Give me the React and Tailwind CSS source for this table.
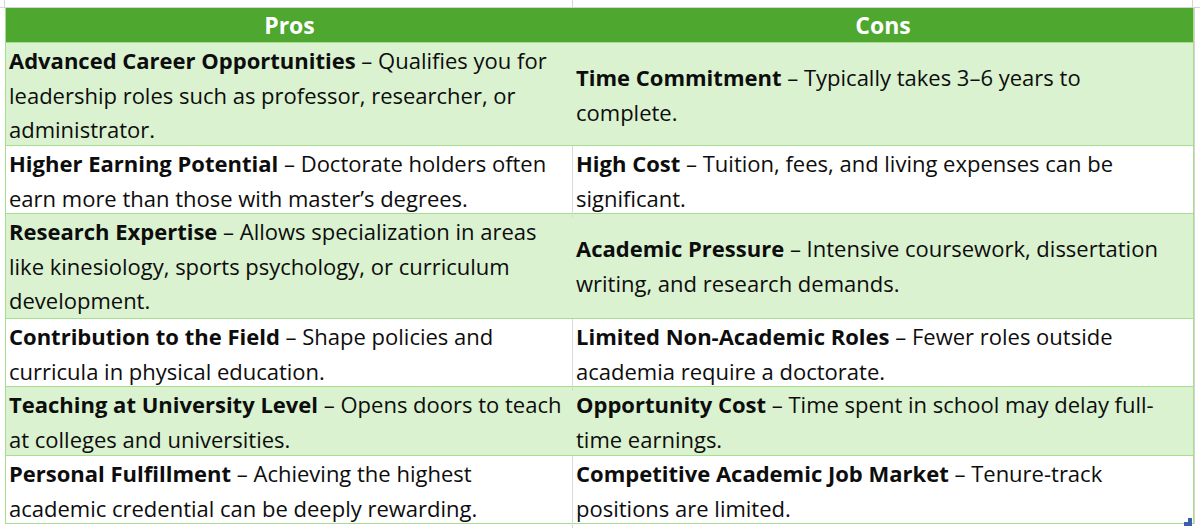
import React from 'react';

const rows = [
  {
    h: 'h-[103px]',
    band: true,
    pros: { b: 'Advanced Career Opportunities', lines: ['Qualifies you for', 'leadership roles such as professor, researcher, or', 'administrator.'] },
    cons: { b: 'Time Commitment', lines: ['Typically takes 3–6 years to', 'complete.'] },
  },
  {
    h: 'h-[68px]',
    band: false,
    pros: { b: 'Higher Earning Potential', lines: ['Doctorate holders often', 'earn more than those with master’s degrees.'] },
    cons: { b: 'High Cost', lines: ['Tuition, fees, and living expenses can be', 'significant.'] },
  },
  {
    h: 'h-[105px]',
    band: true,
    pros: { b: 'Research Expertise', lines: ['Allows specialization in areas', 'like kinesiology, sports psychology, or curriculum', 'development.'] },
    cons: { b: 'Academic Pressure', lines: ['Intensive coursework, dissertation', 'writing, and research demands.'] },
  },
  {
    h: 'h-[68px]',
    band: false,
    pros: { b: 'Contribution to the Field', lines: ['Shape policies and', 'curricula in physical education.'] },
    cons: { b: 'Limited Non-Academic Roles', lines: ['Fewer roles outside', 'academia require a doctorate.'] },
  },
  {
    h: 'h-[69px]',
    band: true,
    pros: { b: 'Teaching at University Level', lines: ['Opens doors to teach', 'at colleges and universities.'] },
    cons: { b: 'Opportunity Cost', lines: ['Time spent in school may delay full-', 'time earnings.'] },
  },
  {
    h: 'h-[68px]',
    band: false,
    pros: { b: 'Personal Fulfillment', lines: ['Achieving the highest', 'academic credential can be deeply rewarding.'] },
    cons: { b: 'Competitive Academic Job Market', lines: ['Tenure-track', 'positions are limited.'] },
  },
];

const Cell = ({ item, className }) => (
  <div className={`flex items-center px-[3px] pb-[3px] ${className}`}>
    <div className="leading-[34.5px] whitespace-nowrap">
      <div>
        <span className="font-bold">{item.b}</span> – {item.lines[0]}
      </div>
      {item.lines.slice(1).map((l, i) => (
        <div key={i}>{l}</div>
      ))}
    </div>
  </div>
);

export default function App() {
  return (
    <div
      className="w-[1200px] h-[528px] bg-white overflow-hidden text-[22px] text-[#0d0d0d] relative"
      style={{ fontFamily: '"Open Sans", "Noto Sans", sans-serif' }}
    >
      {/* sheet row above the table */}
      <div className="h-[8px] border-b border-[#d4d4d4] flex">
        <div className="w-[5px] border-r border-[#d4d4d4]" />
        <div className="w-[568px] border-r border-[#d4d4d4]" />
        <div className="w-[620px] border-r border-[#d4d4d4]" />
      </div>

      <div className="flex">
        <div className="w-[5px] shrink-0" />
        <div className="w-[1189px] shrink-0 border-l border-r border-b border-[#a6dd8f] relative">
          <div className="h-[34px] pb-[2px] bg-[#4ea72e] grid grid-cols-[567px_620px] text-white font-bold text-[23px]">
            <div className="flex items-center justify-center">Pros</div>
            <div className="flex items-center justify-center">Cons</div>
          </div>
          {rows.map((r, i) => (
            <div
              key={i}
              className={`grid grid-cols-[567px_620px] border-t border-[#a6dd8f] ${r.h} ${r.band ? 'bg-[#daf2d0]' : 'bg-white'}`}
            >
              <Cell item={r.pros} className={r.band ? '' : 'border-r border-[#d9d9d9]'} />
              <Cell item={r.cons} />
            </div>
          ))}
          <svg className="absolute right-[1px] bottom-[-3px]" width="8" height="8" viewBox="0 0 8 8">
            <path d="M4 0h4v8H0V4h4z" fill="#3b5ea8" />
          </svg>
        </div>
        <div className="flex-1 border-l border-[#d4d4d4]" />
      </div>
    </div>
  );
}
